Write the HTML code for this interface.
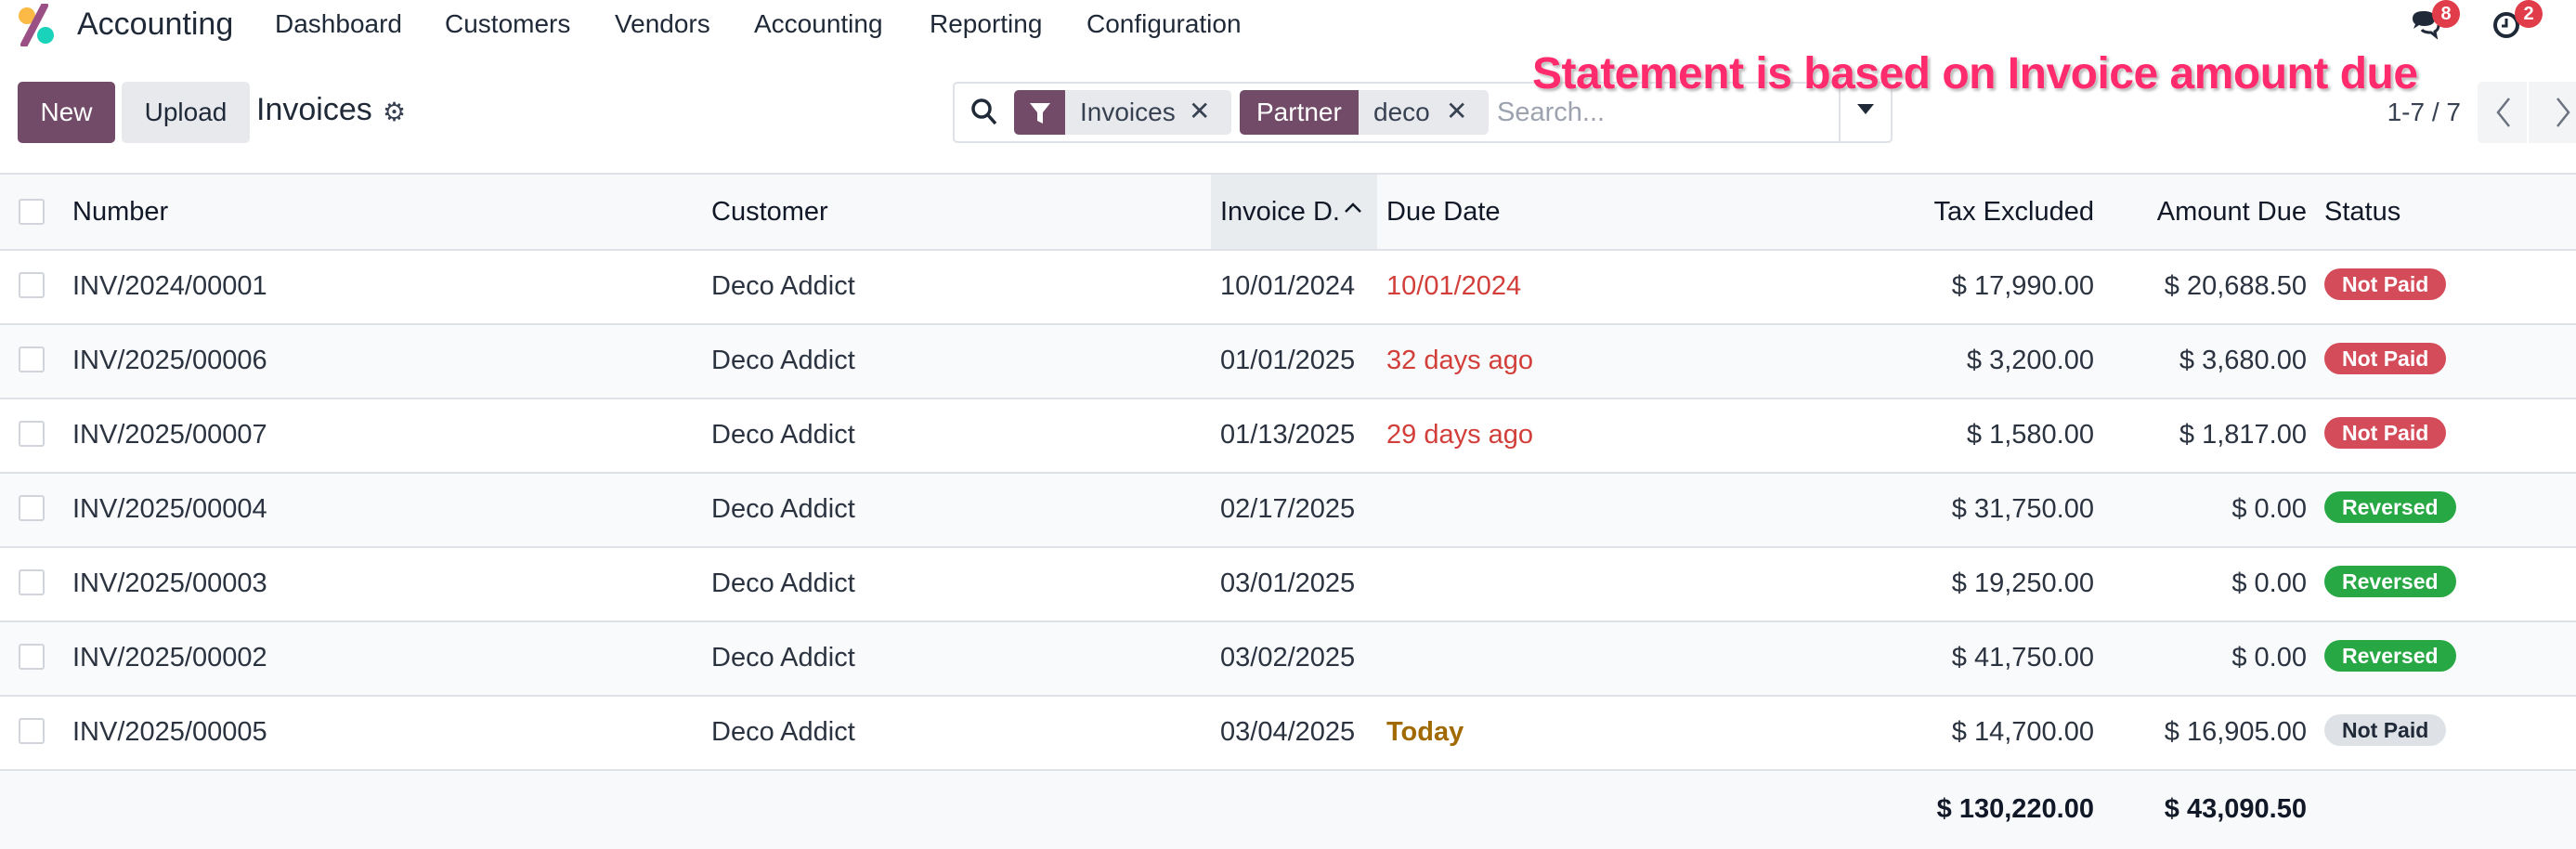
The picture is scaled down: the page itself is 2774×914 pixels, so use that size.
<!DOCTYPE html>
<html><head><meta charset="utf-8"><style>
*{box-sizing:border-box;margin:0;padding:0}
body{width:2774px;height:914px;overflow:hidden;background:#fff;font-family:"Liberation Sans",sans-serif;color:#2b3340;font-size:29px;position:relative}
.a{position:absolute;white-space:nowrap}
.nav{font-size:28px;color:#1f2937}
.row{position:absolute;left:0;width:2774px;height:80px;border-bottom:2px solid #dee2e6}
.cb{position:absolute;left:20px;width:28px;height:28px;border:2px solid #d1d5db;border-radius:3px;background:#fff}
.c{position:absolute;top:22px;white-space:nowrap}
.r{text-align:right}
.badge{position:absolute;left:2503px;top:19px;height:34px;border-radius:17px;color:#fff;font-weight:bold;font-size:23px;line-height:34px;padding:0 19px}
.np{background:#d44c59}
.rv{background:#27a844}
.gr{background:#dee2e6;color:#1f2937}
</style></head><body>
<svg class="a" style="left:18px;top:4px" width="46" height="46" viewBox="0 0 46 46">
<circle cx="11" cy="13" r="9" fill="#fbb945"/><circle cx="31" cy="34" r="9" fill="#1ad3bb"/>
<path d="M30 2 L8 44" stroke="#9a4f85" stroke-width="8" stroke-linecap="round"/></svg>
<div class="a" style="left:83px;top:7px;font-size:34px;color:#1f2937">Accounting</div>
<div class="a nav" style="left:296px;top:10px">Dashboard</div>
<div class="a nav" style="left:479px;top:10px">Customers</div>
<div class="a nav" style="left:662px;top:10px">Vendors</div>
<div class="a nav" style="left:812px;top:10px">Accounting</div>
<div class="a nav" style="left:1001px;top:10px">Reporting</div>
<div class="a nav" style="left:1170px;top:10px">Configuration</div>
<svg class="a" style="left:2594px;top:10px" width="40" height="36" viewBox="0 0 40 36"><path d="M4 10 q0-8 12-8 q12 0 12 8 q0 8-12 8 q-3 0-5-1 l-6 4 2-5 q-3-2-3-6z" fill="#1f2937"/><path d="M14 22 q2 3 10 3 l5 4-1-5 q4-2 4-7" fill="none" stroke="#1f2937" stroke-width="3"/></svg>
<div class="a" style="left:2619px;top:0px;width:30px;height:30px;border-radius:15px;background:#e03c4a;color:#fff;font-size:20px;font-weight:bold;text-align:center;line-height:30px">8</div>
<svg class="a" style="left:2683px;top:10px" width="34" height="34" viewBox="0 0 34 34"><circle cx="16" cy="17" r="12" fill="none" stroke="#1f2937" stroke-width="4"/><path d="M16 10 v8 h-5" fill="none" stroke="#1f2937" stroke-width="3"/></svg>
<div class="a" style="left:2708px;top:0px;width:30px;height:30px;border-radius:15px;background:#e03c4a;color:#fff;font-size:20px;font-weight:bold;text-align:center;line-height:30px">2</div>
<div class="a" style="left:19px;top:88px;width:105px;height:66px;background:#714b67;border-radius:5px;color:#fff;font-size:28px;line-height:66px;text-align:center">New</div>
<div class="a" style="left:131px;top:88px;width:138px;height:66px;background:#e7e9ed;border-radius:5px;color:#1f2937;font-size:28px;line-height:66px;text-align:center">Upload</div>
<div class="a" style="left:276px;top:99px;font-size:34px;color:#1f2937">Invoices</div>
<div class="a" style="left:412px;top:104px;font-size:28px;color:#374151">⚙</div>
<div class="a" style="left:1026px;top:88px;width:1012px;height:66px;border:2px solid #dee2e6;border-radius:5px"></div>
<svg class="a" style="left:1044px;top:104px" width="32" height="34" viewBox="0 0 32 34"><circle cx="13" cy="13" r="9" fill="none" stroke="#1f2937" stroke-width="3.5"/><path d="M20 20 l8 9" stroke="#1f2937" stroke-width="3.5"/></svg>
<div class="a" style="left:1092px;top:97px;width:55px;height:48px;background:#714b67;border-radius:5px 0 0 5px"></div>
<svg class="a" style="left:1108px;top:110px" width="24" height="24" viewBox="0 0 24 24"><path d="M1 1 h22 l-8 10 v12 l-6-3 v-9z" fill="#fff"/></svg>
<div class="a" style="left:1147px;top:97px;width:179px;height:48px;background:#e7e9ed;border-radius:0 5px 5px 0"></div>
<div class="a" style="left:1163px;top:105px;color:#374151;font-size:28px">Invoices</div>
<div class="a" style="left:1280px;top:103px;font-size:28px;color:#374151">✕</div>
<div class="a" style="left:1335px;top:97px;width:128px;height:48px;background:#714b67;border-radius:5px 0 0 5px;color:#fff;line-height:48px;padding-left:18px;font-size:28px">Partner</div>
<div class="a" style="left:1463px;top:97px;width:140px;height:48px;background:#e7e9ed;border-radius:0 5px 5px 0"></div>
<div class="a" style="left:1479px;top:105px;color:#374151;font-size:28px">deco</div>
<div class="a" style="left:1557px;top:103px;font-size:28px;color:#374151">✕</div>
<div class="a" style="left:1612px;top:105px;color:#9ca3af;font-size:29px">Search...</div>
<div class="a" style="left:1980px;top:90px;width:2px;height:62px;background:#dee2e6"></div>
<div class="a" style="left:2000px;top:112px;width:0;height:0;border-left:9px solid transparent;border-right:9px solid transparent;border-top:11px solid #1f2937"></div>
<div class="a" style="left:1650px;top:52px;font-size:48px;font-weight:bold;color:#ff2b6d;text-shadow:0 0 3px #fff,2px 2px 3px #999;letter-spacing:-0.5px">Statement is based on Invoice amount due</div>
<div class="a" style="right:124px;top:105px;color:#374151;font-size:28px">1-7 / 7</div>
<div class="a" style="left:2668px;top:88px;width:106px;height:66px;background:#f3f4f6;border-radius:5px 0 0 5px"></div>
<div class="a" style="left:2721px;top:88px;width:2px;height:66px;background:#fff"></div>
<svg class="a" style="left:2686px;top:104px" width="20" height="34" viewBox="0 0 20 34"><path d="M16 2 L4 17 L16 32" fill="none" stroke="#6b7280" stroke-width="2.5"/></svg>
<svg class="a" style="left:2750px;top:104px" width="20" height="34" viewBox="0 0 20 34"><path d="M4 2 L16 17 L4 32" fill="none" stroke="#6b7280" stroke-width="2.5"/></svg>
<div class="row" style="top:186px;height:84px;background:#f8f9fa;border-top:2px solid #dee2e6">
<div class="a" style="left:1304px;top:0;width:179px;height:80px;background:#e9ecef"></div>
<div class="cb" style="top:26px"></div>
<div class="c" style="left:78px;top:24px;color:#111827">Number</div>
<div class="c" style="left:766px;top:24px;color:#111827">Customer</div>
<div class="c" style="left:1314px;top:24px;color:#111827">Invoice D.</div>
<svg class="a" style="left:1446px;top:28px" width="22" height="16" viewBox="0 0 22 16"><path d="M3 12 l8-8 8 8" fill="none" stroke="#111827" stroke-width="2.5"/></svg>
<div class="c" style="left:1493px;top:24px;color:#111827">Due Date</div>
<div class="c r" style="right:519px;top:24px;color:#111827">Tax Excluded</div>
<div class="c r" style="right:290px;top:24px;color:#111827">Amount Due</div>
<div class="c" style="left:2503px;top:24px;color:#111827">Status</div>
</div>
<div class="row" style="top:270px;background:#fff"><div class="cb" style="top:23px"></div><div class="c" style="left:78px">INV/2024/00001</div><div class="c" style="left:766px">Deco Addict</div><div class="c" style="left:1314px">10/01/2024</div><div class="c" style="left:1493px;color:#d23f3a">10/01/2024</div><div class="c" style="right:519px">$ 17,990.00</div><div class="c" style="right:290px">$ 20,688.50</div><div class="badge np">Not Paid</div></div>
<div class="row" style="top:350px;background:#f9fafb"><div class="cb" style="top:23px"></div><div class="c" style="left:78px">INV/2025/00006</div><div class="c" style="left:766px">Deco Addict</div><div class="c" style="left:1314px">01/01/2025</div><div class="c" style="left:1493px;color:#d23f3a">32 days ago</div><div class="c" style="right:519px">$ 3,200.00</div><div class="c" style="right:290px">$ 3,680.00</div><div class="badge np">Not Paid</div></div>
<div class="row" style="top:430px;background:#fff"><div class="cb" style="top:23px"></div><div class="c" style="left:78px">INV/2025/00007</div><div class="c" style="left:766px">Deco Addict</div><div class="c" style="left:1314px">01/13/2025</div><div class="c" style="left:1493px;color:#d23f3a">29 days ago</div><div class="c" style="right:519px">$ 1,580.00</div><div class="c" style="right:290px">$ 1,817.00</div><div class="badge np">Not Paid</div></div>
<div class="row" style="top:510px;background:#f9fafb"><div class="cb" style="top:23px"></div><div class="c" style="left:78px">INV/2025/00004</div><div class="c" style="left:766px">Deco Addict</div><div class="c" style="left:1314px">02/17/2025</div><div class="c" style="right:519px">$ 31,750.00</div><div class="c" style="right:290px">$ 0.00</div><div class="badge rv">Reversed</div></div>
<div class="row" style="top:590px;background:#fff"><div class="cb" style="top:23px"></div><div class="c" style="left:78px">INV/2025/00003</div><div class="c" style="left:766px">Deco Addict</div><div class="c" style="left:1314px">03/01/2025</div><div class="c" style="right:519px">$ 19,250.00</div><div class="c" style="right:290px">$ 0.00</div><div class="badge rv">Reversed</div></div>
<div class="row" style="top:670px;background:#f9fafb"><div class="cb" style="top:23px"></div><div class="c" style="left:78px">INV/2025/00002</div><div class="c" style="left:766px">Deco Addict</div><div class="c" style="left:1314px">03/02/2025</div><div class="c" style="right:519px">$ 41,750.00</div><div class="c" style="right:290px">$ 0.00</div><div class="badge rv">Reversed</div></div>
<div class="row" style="top:750px;background:#fff"><div class="cb" style="top:23px"></div><div class="c" style="left:78px">INV/2025/00005</div><div class="c" style="left:766px">Deco Addict</div><div class="c" style="left:1314px">03/04/2025</div><div class="c" style="left:1493px;color:#a06a00;font-weight:bold">Today</div><div class="c" style="right:519px">$ 14,700.00</div><div class="c" style="right:290px">$ 16,905.00</div><div class="badge gr">Not Paid</div></div>
<div class="row" style="top:830px;height:84px;background:#f8f9fa;border:none"><div class="c" style="right:519px;top:25px;font-weight:bold;color:#111827">$ 130,220.00</div><div class="c" style="right:290px;top:25px;font-weight:bold;color:#111827">$ 43,090.50</div></div>
</body></html>
